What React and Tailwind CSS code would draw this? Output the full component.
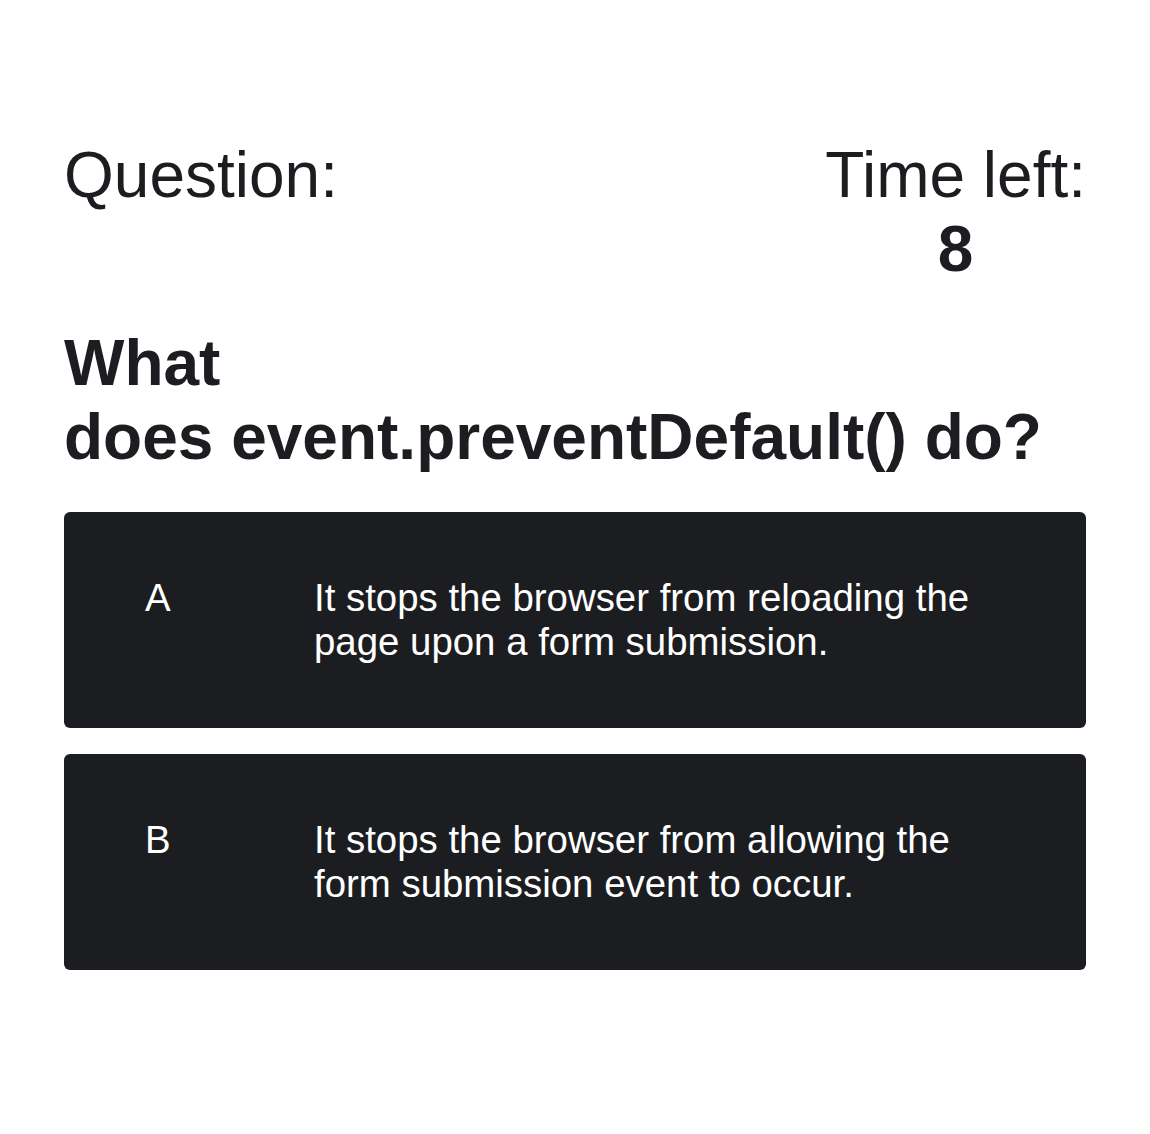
const options = [
  { letter: 'A', text: 'It stops the browser from reloading the page upon a form submission.' },
  { letter: 'B', text: 'It stops the browser from allowing the form submission event to occur.' },
];

export default function App() {
  return (
    <div className="min-h-[1134px] bg-white px-16 pt-[139px] text-[#1c1d21] font-['Liberation_Sans',Arial,sans-serif] leading-[1.15]">
      <div className="flex justify-between text-[64px]">
        <div>Question:</div>
        <div className="text-center">
          <div>Time left:</div>
          <div className="font-bold">8</div>
        </div>
      </div>

      <h2 className="mt-[41px] text-[64px] font-bold">
        What
        <br />
        does event.preventDefault() do?
      </h2>

      <div className="mt-[38px] flex flex-col gap-[26px]">
        {options.map((o) => (
          <button
            key={o.letter}
            className="flex h-[216px] items-center rounded-md bg-[#1c1d21] pl-[81px] pr-[80px] text-left text-[38.4px] leading-[1.15] text-white"
          >
            <div className="flex items-start">
              <span className="w-[169px] shrink-0">{o.letter}</span>
              <span>{o.text}</span>
            </div>
          </button>
        ))}
      </div>
    </div>
  );
}
